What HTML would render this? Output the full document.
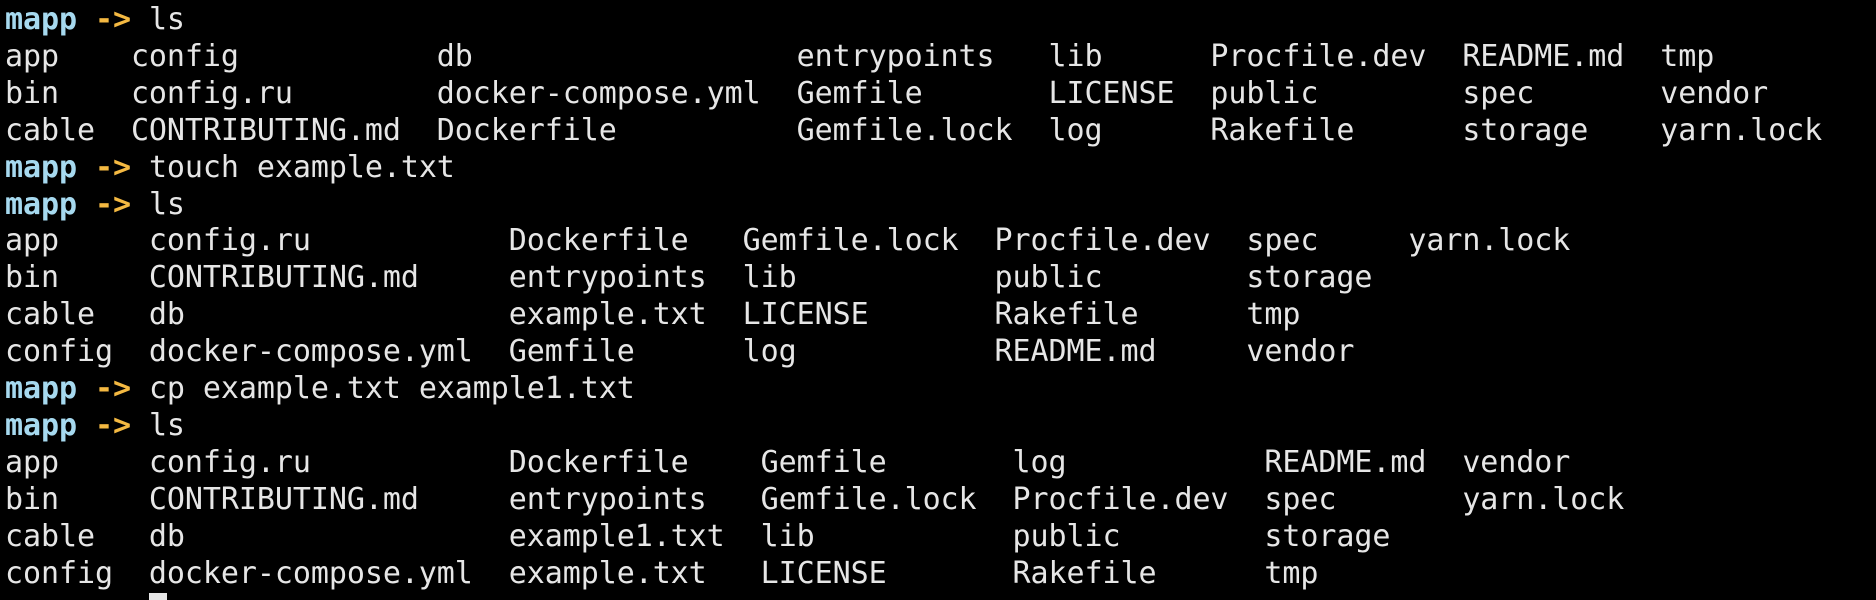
<!DOCTYPE html>
<html><head><meta charset="utf-8"><style>
html,body{margin:0;padding:0;background:#000;width:1876px;height:600px;overflow:hidden}
pre{margin:0;padding:0 0 0 5px;position:relative;top:2px;font-family:"DejaVu Sans Mono","Liberation Mono",monospace;font-size:30px;line-height:36.9px;color:#e6e6e6;letter-spacing:-0.07px}
.u{color:#a6d9ef;font-weight:bold}
.a{color:#f4b942;font-weight:bold}
.c{background:#e6e6e6}
</style></head><body><pre><span class="u">mapp</span> <span class="a">-&gt;</span> ls
app    config           db                  entrypoints   lib      Procfile.dev  README.md  tmp
bin    config.ru        docker-compose.yml  Gemfile       LICENSE  public        spec       vendor
cable  CONTRIBUTING.md  Dockerfile          Gemfile.lock  log      Rakefile      storage    yarn.lock
<span class="u">mapp</span> <span class="a">-&gt;</span> touch example.txt
<span class="u">mapp</span> <span class="a">-&gt;</span> ls
app     config.ru           Dockerfile   Gemfile.lock  Procfile.dev  spec     yarn.lock
bin     CONTRIBUTING.md     entrypoints  lib           public        storage
cable   db                  example.txt  LICENSE       Rakefile      tmp
config  docker-compose.yml  Gemfile      log           README.md     vendor
<span class="u">mapp</span> <span class="a">-&gt;</span> cp example.txt example1.txt
<span class="u">mapp</span> <span class="a">-&gt;</span> ls
app     config.ru           Dockerfile    Gemfile       log           README.md  vendor
bin     CONTRIBUTING.md     entrypoints   Gemfile.lock  Procfile.dev  spec       yarn.lock
cable   db                  example1.txt  lib           public        storage
config  docker-compose.yml  example.txt   LICENSE       Rakefile      tmp
<span class="u">mapp</span> <span class="a">-&gt;</span> <span class="c"> </span>
</pre></body></html>
